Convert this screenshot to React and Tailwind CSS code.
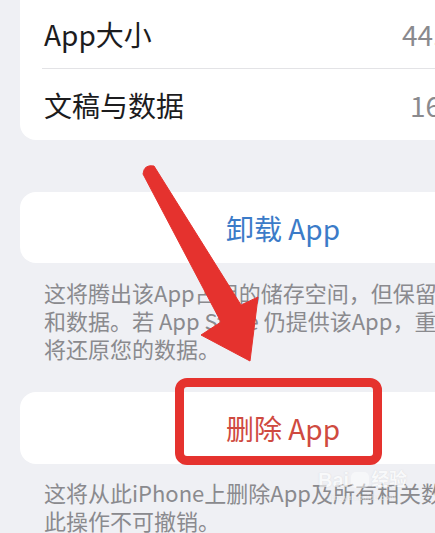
export default function App() {
  const font = { fontFamily: '"Noto Sans CJK SC", "Noto Sans", sans-serif' };
  return (
    <div
      className="relative w-[435px] h-[533px] overflow-hidden bg-[#eff0f4]"
      style={font}
    >
      <div className="flex flex-col">
        {/* Card 1 */}
        <div className="ml-[20px] mt-[-20px] w-[526px] rounded-[16px] bg-white pt-[20px]">
          <div className="flex h-[68px] items-center pl-[24px] text-[28px] leading-none">
            <span className="w-[358px] shrink-0 text-[#1c1c1e]">App大小</span>
            <span className="whitespace-nowrap text-[#8a8a8e]">44.2 MB</span>
          </div>
          <div className="ml-[22px] h-px bg-[#e3e3e6]" />
          <div className="flex h-[71px] items-center pl-[24px] text-[28px] leading-none">
            <span className="w-[366px] shrink-0 text-[#1c1c1e]">文稿与数据</span>
            <span className="whitespace-nowrap text-[#8a8a8e]">16 KB</span>
          </div>
        </div>

        {/* Card 2 */}
        <div className="ml-[20px] mt-[52px] flex h-[71px] w-[526px] items-center justify-center rounded-[16px] bg-white text-[28px] leading-none text-[#3b7bc8]">
          卸载 App
        </div>
        <div className="whitespace-nowrap pl-[44px] pt-[15px] text-[22px] leading-[28px] text-[#8a8a8e]">
          <div>这将腾出该App占用的储存空间，但保留App的文稿</div>
          <div>和数据。若 App Store 仍提供该App，重新安装</div>
          <div>将还原您的数据。</div>
        </div>

        {/* Card 3 */}
        <div className="ml-[20px] mt-[30px] flex h-[72px] w-[526px] items-center justify-center rounded-[16px] bg-white text-[28px] leading-none text-[#cf4a40]">
          删除 App
        </div>
        <div className="whitespace-nowrap pl-[44px] pt-[14px] text-[22px] leading-[28px] text-[#8a8a8e]">
          <div>这将从此iPhone上删除App及所有相关数据。</div>
          <div>此操作不可撤销。</div>
        </div>
      </div>

      {/* Red annotation rectangle */}
      <div className="absolute left-[175px] top-[378px] h-[87px] w-[207px] rounded-[12px] border-[9px] border-[#e5322e]" />

      {/* Red arrow */}
      <svg
        className="absolute left-0 top-0"
        width="435"
        height="533"
        viewBox="0 0 435 533"
      >
        <path
          d="M143 174 Q144 164 154 166 L241 305 L258 297 L250 361 L201 335 L221 322 Z"
          fill="#e5322e"
          stroke="#e5322e"
          strokeWidth="1"
          strokeLinejoin="round"
        />
      </svg>

      {/* Watermark */}
      <div className="absolute left-[318px] top-[470px] flex flex-col items-center text-white opacity-60 [text-shadow:0_0_1px_rgba(150,150,150,0.5)]">
        <div
          className="flex items-center gap-[2px] text-[20px] font-bold leading-none"
          style={{ fontFamily: '"Liberation Sans", "Noto Sans CJK SC", sans-serif' }}
        >
          <span>Bai</span>
          <span className="inline-block h-[16px] w-[18px] rounded-[5px] bg-white/80" />
          <span className="text-[18px]">经验</span>
        </div>
        <div
          className="mt-[3px] text-[9px] leading-none"
          style={{ fontFamily: '"Liberation Serif", serif' }}
        >
          jingyan.baidu.com
        </div>
      </div>
    </div>
  );
}
